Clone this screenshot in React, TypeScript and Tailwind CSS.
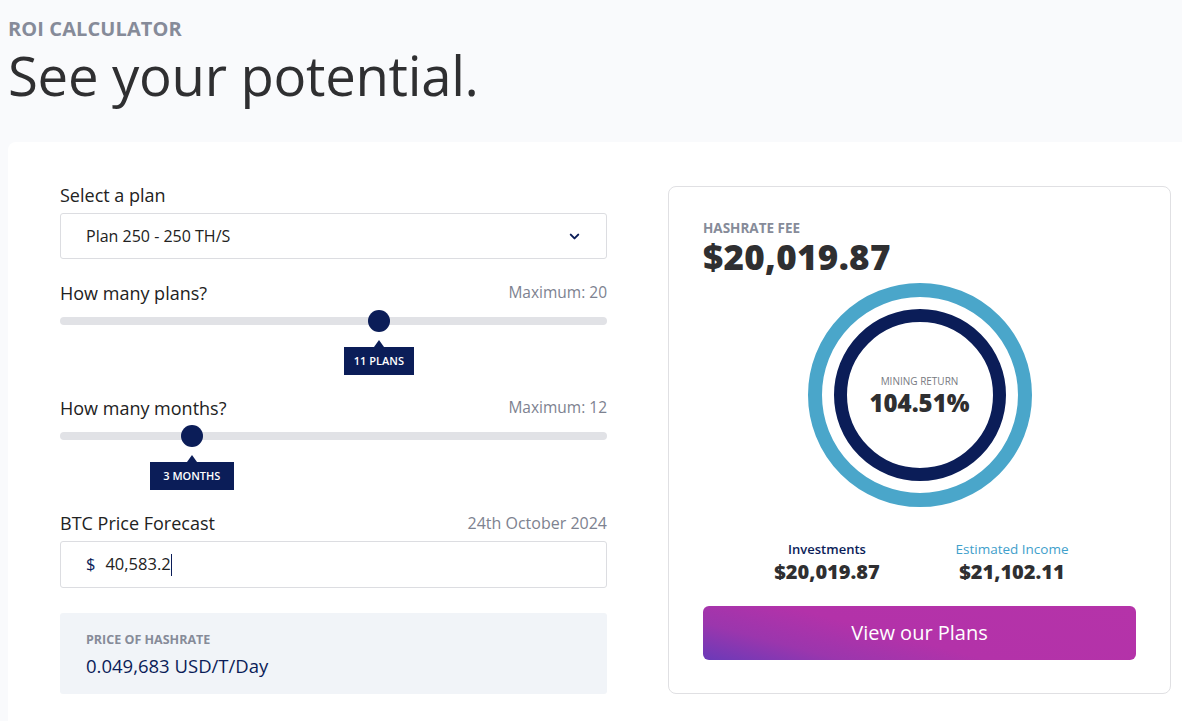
import { ChevronDown } from "lucide-react";

const font = { fontFamily: "'Open Sans', 'Noto Sans', sans-serif" };

function SliderField({
  label,
  max,
  percent,
  tip,
  tipWidth,
}: {
  label: string;
  max: string;
  percent: number;
  tip: string;
  tipWidth: string;
}) {
  return (
    <div>
      <div className="flex h-6 items-center justify-between">
        <span className="text-[18px] text-[#222]">{label}</span>
        <span className="text-[15.5px] text-[#7d8290]">{max}</span>
      </div>
      <div className="relative mt-3 h-2 rounded-full bg-[#e1e2e6]">
        <div
          className="absolute top-1/2 flex -translate-x-1/2 -translate-y-[11px] flex-col items-center"
          style={{ left: `${percent}%` }}
        >
          <div className="h-[22px] w-[22px] rounded-full bg-[#0b1d58]" />
          <div className="mt-[8px] h-0 w-0 border-x-[5px] border-b-[7px] border-x-transparent border-b-[#0b1d58]" />
          <div className={`${tipWidth} flex h-[28px] items-center justify-center bg-[#0b1d58] text-[11px] font-semibold text-white`}>
            {tip}
          </div>
        </div>
      </div>
    </div>
  );
}

export default function App() {
  return (
    <main className="min-h-screen w-[1182px] overflow-hidden bg-[#f9fafc] text-[#222]" style={font}>
      <header className="h-[142px] px-2 pt-[17px]">
        <p className="text-[20px] font-bold leading-6 tracking-[0.1px] text-[#868b99]">ROI CALCULATOR</p>
        <h1 className="mt-[4px] text-[54.5px] leading-[60px] tracking-[-0.3px] text-[#2f2f31]">See your potential.</h1>
      </header>

      <section className="ml-2 flex h-[600px] gap-[61px] rounded-tl-lg bg-white pl-[52px]">
        <div className="w-[547px] pt-[41px]">
          <div className="flex h-6 items-center text-[18px] text-[#222]">Select a plan</div>
          <div className="mt-[6px] flex h-[46px] items-center justify-between rounded-[3px] border border-[#dcdde1] pl-[25px] pr-[24px]">
            <span className="text-[16px] text-[#222]">Plan 250 - 250 TH/S</span>
            <ChevronDown size={15} strokeWidth={3.2} className="text-[#0b1d58]" />
          </div>

          <div className="mt-[22px]">
            <SliderField label="How many plans?" max="Maximum: 20" percent={58.3} tip="11 PLANS" tipWidth="w-[70px]" />
          </div>

          <div className="mt-[71px]">
            <SliderField label="How many months?" max="Maximum: 12" percent={24.1} tip="3 MONTHS" tipWidth="w-[84px]" />
          </div>

          <div className="mt-[71px] flex h-6 items-center justify-between">
            <span className="text-[18px] text-[#222]">BTC Price Forecast</span>
            <span className="text-[16px] text-[#7d8290]">24th October 2024</span>
          </div>
          <div className="mt-[6px] flex h-[47px] items-center rounded-[3px] border border-[#dcdde1] pl-[25px] text-[16.5px]">
            <span className="text-[#0b1d58]">$</span>
            <span className="ml-[10px] text-[#222]">40,583.2</span>
            <span className="h-[22px] w-[1.5px] bg-[#0b1d58]" />
          </div>

          <div className="mt-[25px] h-[81px] rounded-[3px] bg-[#f1f4f8] pl-[26px] pt-[19px]">
            <p className="text-[12.5px] font-bold leading-4 text-[#868b99]">PRICE OF HASHRATE</p>
            <p className="mt-[6px] text-[18.5px] leading-6 text-[#0b1d58]">0.049,683 USD/T/Day</p>
          </div>
        </div>

        <div className="mt-[44px] h-[508px] w-[503px] rounded-lg border-[1.5px] border-[#e0e0e3] px-[34px] pt-[33px]">
          <p className="text-[13.5px] font-bold leading-4 text-[#868b99]">HASHRATE FEE</p>
          <p className="mt-[1px] text-[35px] font-extrabold leading-[40px] tracking-[0.3px] text-[#2f2f31]">$20,019.87</p>

          <div className="mt-[6px] flex justify-center">
            <div className="relative h-[224px] w-[226px]">
              <svg width="226" height="224" viewBox="0 0 226 224" className="absolute inset-0">
                <circle cx="113" cy="112" r="105" fill="none" stroke="#4aa6ca" strokeWidth="14" />
                <circle cx="113" cy="112" r="79.5" fill="none" stroke="#0b1d58" strokeWidth="13" />
              </svg>
              <div className="absolute inset-0 flex flex-col items-center justify-center pt-[2px]">
                <span className="text-[10px] leading-3 text-[#777a82]">MINING RETURN</span>
                <span className="mt-[2px] text-[24px] font-extrabold leading-7 text-[#2f2f31]">104.51%</span>
              </div>
            </div>
          </div>

          <div className="mx-auto mt-[34px] grid w-[370px] grid-cols-2 text-center">
            <div>
              <p className="text-[13px] font-semibold leading-4 text-[#0b1d58]">Investments</p>
              <p className="mt-[3px] text-[20px] font-extrabold leading-6 text-[#2f2f31]">$20,019.87</p>
            </div>
            <div>
              <p className="text-[13.5px] leading-4 text-[#3fa0cb]">Estimated Income</p>
              <p className="mt-[3px] text-[20px] font-extrabold leading-6 text-[#2f2f31]">$21,102.11</p>
            </div>
          </div>

          <button className="mt-[22px] flex h-[54px] w-full items-center justify-center rounded-md bg-[linear-gradient(15deg,#6a3ab8_0%,#9b36ad_22%,#b332a9_45%,#b533a9_100%)] text-[20px] font-medium text-white">
            View our Plans
          </button>
        </div>
      </section>
    </main>
  );
}
